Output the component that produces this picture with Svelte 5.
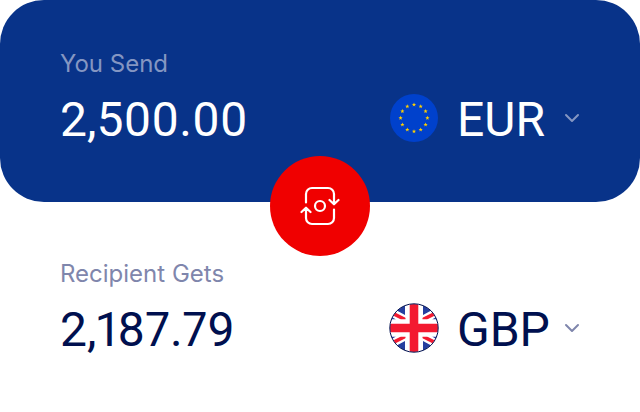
<script>
  let sendAmount = $state('2,500.00');
  let receiveAmount = $state('2,187.79');
  let sendCurrency = $state('EUR');
  let receiveCurrency = $state('GBP');

  const stars = Array.from({ length: 12 }, (_, i) => {
    const angle = (i * Math.PI) / 6;
    return { x: 24 + 13.4 * Math.sin(angle), y: 24 - 13.4 * Math.cos(angle) };
  });

  // The four quarters of the Union flag mirror each other.
  const quarters = ['', 'translate(48 0) scale(-1 1)', 'translate(0 48) scale(1 -1)', 'translate(48 48) scale(-1 -1)'];

  function swap() {
    [sendCurrency, receiveCurrency] = [receiveCurrency, sendCurrency];
    [sendAmount, receiveAmount] = [receiveAmount, sendAmount];
  }
</script>

{#snippet flag(code)}
  {#if code === 'EUR'}
    <svg class="flag" viewBox="0 0 48 48" aria-hidden="true">
      <circle cx="24" cy="24" r="24" fill="#0041cc" />
      {#each stars as star}
        <path
          transform="translate({star.x} {star.y})"
          d="M0-2.2.6-.7 2.1-.7.9.3 1.3 1.8 0 .9-1.3 1.8-.9.3-2.1-.7-.6-.7Z"
          fill="#ffd000"
        />
      {/each}
    </svg>
  {:else}
    <svg class="flag" viewBox="0 0 48 48" aria-hidden="true">
      <clipPath id="disc"><circle cx="24" cy="24" r="24" /></clipPath>
      <g clip-path="url(#disc)">
        <path fill="#fff" d="M0 0h48v48H0z" />
        {#each quarters as mirror}
          <g transform={mirror}>
            <path fill="#263f9f" d="M15 0v11L4 5V0ZM0 12l6 3.500H0z" />
            <path fill="#f31a30" d="M3 7.500 16 14v1.500h-5L1 10.500Z" />
          </g>
        {/each}
        <path fill="#fff" d="M15.500 0h17v48h-17zM0 15.500h48v17H0z" />
        <path fill="#f31a30" d="M19.700 0h8.600v48h-8.600zM0 19.700h48v8.600H0z" />
      </g>
      <circle cx="24" cy="24" r="24.200" fill="none" stroke="#00104f" />
    </svg>
  {/if}
{/snippet}

{#snippet chevron()}
  <svg class="chevron" viewBox="0 0 16 16" aria-hidden="true">
    <path d="m2 5 6 6 6-6" />
  </svg>
{/snippet}

<form class="converter" onsubmit={(e) => e.preventDefault()}>
  <section class="panel send">
    <label for="send-amount">You Send</label>
    <div class="row">
      <input id="send-amount" inputmode="decimal" bind:value={sendAmount} />
      <div class="currency">
        {@render flag(sendCurrency)}
        <select aria-label="Currency you send" bind:value={sendCurrency}>
          <option>EUR</option>
          <option>GBP</option>
        </select>
        {@render chevron()}
      </div>
    </div>
  </section>

  <section class="panel receive">
    <label for="receive-amount">Recipient Gets</label>
    <div class="row">
      <input id="receive-amount" inputmode="decimal" bind:value={receiveAmount} />
      <div class="currency">
        {@render flag(receiveCurrency)}
        <select aria-label="Currency the recipient gets" bind:value={receiveCurrency}>
          <option>EUR</option>
          <option>GBP</option>
        </select>
        {@render chevron()}
      </div>
    </div>
    <button class="swap" type="button" aria-label="Swap currencies" onclick={swap}>
      <svg viewBox="0 0 40 40" aria-hidden="true">
        <path d="M6 16.5V8a6 6 0 0 1 6-6h16a6 6 0 0 1 6 6v10M29.5 14l4.5 4.3 4.5-4.3" />
        <path d="M34 23.5V32a6 6 0 0 1-6 6H12a6 6 0 0 1-6-6V22M1.500 26 6 21.700l4.500 4.300" />
        <circle cx="20" cy="20" r="5" />
      </svg>
    </button>
  </section>
</form>

<style>
  :global(body) {
    margin: 0;
    background: #fff;
  }

  .converter {
    font-family: Roboto, 'Liberation Sans', sans-serif;
  }

  .panel {
    position: relative;
    padding: 48px 60px 54px;
  }

  .send {
    border-radius: 44px;
    background: #083389;
    color: #fff;
    --muted: #8496c2;
  }

  .receive {
    margin-top: 8px;
    color: #00104f;
    --muted: #7f86ac;
  }

  label {
    display: block;
    font-family: Inter, sans-serif;
    font-size: 24px;
    line-height: 32px;
    color: var(--muted);
  }

  .row {
    display: flex;
    align-items: center;
    justify-content: space-between;
    gap: 20px;
    height: 60px;
    margin-top: 8px;
  }

  input,
  select {
    box-sizing: border-box;
    height: 60px;
    margin: 0;
    padding: 2px 0 0;
    border: 0;
    background: none;
    color: inherit;
    font: inherit;
    font-size: 48px;
    font-variant-numeric: proportional-nums;
  }

  input {
    flex: 1;
    min-width: 0;
  }

  .currency {
    position: relative;
    display: flex;
    align-items: center;
    width: 190px;
  }

  .flag {
    flex: none;
    width: 48px;
    height: 48px;
    margin-right: 19px;
    overflow: visible;
  }

  select {
    flex: 1;
    min-width: 0;
    appearance: none;
    cursor: pointer;
  }

  select option {
    color: #00104f;
    font-size: 20px;
  }

  .chevron {
    position: absolute;
    right: 0;
    width: 16px;
    height: 16px;
    fill: none;
    stroke: var(--muted);
    stroke-width: 2;
    stroke-linecap: round;
    stroke-linejoin: round;
    pointer-events: none;
  }

  .swap {
    position: absolute;
    top: -54px;
    left: 50%;
    display: grid;
    place-items: center;
    width: 100px;
    height: 100px;
    padding: 0;
    border: 0;
    border-radius: 50%;
    background: #f00000;
    transform: translateX(-50%);
    cursor: pointer;
  }

  .swap svg {
    width: 40px;
    height: 40px;
    fill: none;
    stroke: #fff;
    stroke-width: 2.2;
    stroke-linecap: round;
    stroke-linejoin: round;
  }
</style>
